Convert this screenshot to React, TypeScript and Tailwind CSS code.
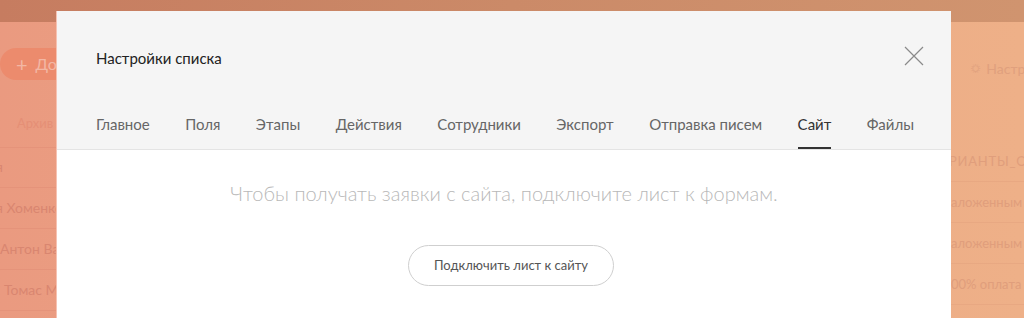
import React from "react";

const TABS = [
  "Главное",
  "Поля",
  "Этапы",
  "Действия",
  "Сотрудники",
  "Экспорт",
  "Отправка писем",
  "Сайт",
  "Файлы",
];

const ACTIVE = "Сайт";

function Backdrop() {
  return (
    <div className="flex h-full w-full flex-col bg-gradient-to-r from-[#ea9a80] via-[#eca884] to-[#eeb088]">
      <div className="h-[22px] w-full shrink-0 bg-gradient-to-r from-[#c67c60] via-[#cb8a68] to-[#d0946f]" />
      <div className="flex flex-1 justify-between">
        <div className="flex w-[57px] flex-col overflow-hidden">
          <div className="mt-[26px] flex h-[32px] w-[80px] items-center gap-2 rounded-l-full rounded-r-lg bg-[#ec8b6d] pl-[16px] text-[16px] text-[#f3b7a4]">
            <span className="text-[20px] leading-none">+</span>
            <span>До</span>
          </div>
          <div className="mt-[34px] whitespace-nowrap pl-[17px] text-[13px] text-[#e58f76]">Архив</div>
          <div className="mt-[13px] flex flex-col whitespace-nowrap text-[14px] text-[#d98670]">
            <div className="flex h-[40px] items-end border-t border-[#e5937a] pb-[10px] -ml-[4px]">я</div>
            <div className="flex h-[41px] items-end border-t border-[#e5937a] pb-[10px] -ml-[4px]">я Хоменко</div>
            <div className="flex h-[41px] items-end border-t border-[#e5937a] pb-[10px]">Антон Ва</div>
            <div className="flex h-[41px] items-end border-t border-[#e5937a] pb-[10px] pl-[4px]">Томас М</div>
            <div className="border-t border-[#e5937a]" />
          </div>
        </div>
        <div className="flex w-[73px] flex-col overflow-hidden">
          <div className="mt-[36px] flex items-center gap-[6px] whitespace-nowrap pl-[20px] text-[14px] text-[#e0a07e]">
            <span className="text-[12px]">☼</span>
            <span>Настройки</span>
          </div>
          <div className="mt-[62px] flex flex-col whitespace-nowrap text-[13px] text-[#e09e7c]">
            <div className="flex h-[40px] items-end pb-[10px] -ml-[2px] tracking-[0.06em]">РИАНТЫ_ОПЛАТЫ</div>
            <div className="flex h-[41px] items-end border-t border-[#e8a882] pb-[10px]">аложенным</div>
            <div className="flex h-[41px] items-end border-t border-[#e8a882] pb-[10px]">аложенным</div>
            <div className="flex h-[41px] items-end border-t border-[#e8a882] pb-[10px]">00% оплата</div>
            <div className="border-t border-[#e8a882]" />
          </div>
        </div>
      </div>
    </div>
  );
}

function CloseIcon() {
  return (
    <svg width="20" height="20" viewBox="0 0 20 20" fill="none" className="text-[#8a8a8a]">
      <path d="M1 1L19 19M19 1L1 19" stroke="currentColor" strokeWidth="1.2" />
    </svg>
  );
}

export default function App() {
  return (
    <div
      className="relative h-[318px] w-[1024px] overflow-hidden"
      style={{ fontFamily: "Lato, 'Noto Sans', sans-serif" }}
    >
      <Backdrop />

      <div className="absolute left-[57px] top-[11px] w-[894px] bg-white shadow-[-1px_0_0_#f6c2b2]">
        <div className="border-b border-[#e4e4e4] bg-[#f5f5f5] pl-[39px] pr-[37px]">
          <div className="flex items-center justify-between pt-[37px]">
            <h2 className="text-[15px] leading-[20px] text-[#222]">Настройки списка</h2>
            <button type="button" className="-mr-[10px] -mt-[4px]">
              <CloseIcon />
            </button>
          </div>
          <div className="mt-[46px] flex justify-between whitespace-nowrap">
            {TABS.map((tab) => (
              <div
                key={tab}
                className={`border-b-2 pb-[13px] text-[15px] leading-[20px] ${
                  tab === ACTIVE ? "border-[#333] text-[#333]" : "border-transparent text-[#666]"
                }`}
              >
                {tab}
              </div>
            ))}
          </div>
        </div>

        <div className="flex flex-col items-center pb-[40px] pt-[30px]">
          <p className="whitespace-nowrap text-[20px] font-light leading-[26px] text-[#b8b8b8]">
            Чтобы получать заявки с сайта, подключите лист к формам.
          </p>
          <button
            type="button"
            className="ml-[14px] mt-[39px] h-[41px] w-[206px] rounded-full border border-[#cfcfcf] text-[13px] text-[#555]"
          >
            Подключить лист к сайту
          </button>
        </div>
      </div>
    </div>
  );
}
